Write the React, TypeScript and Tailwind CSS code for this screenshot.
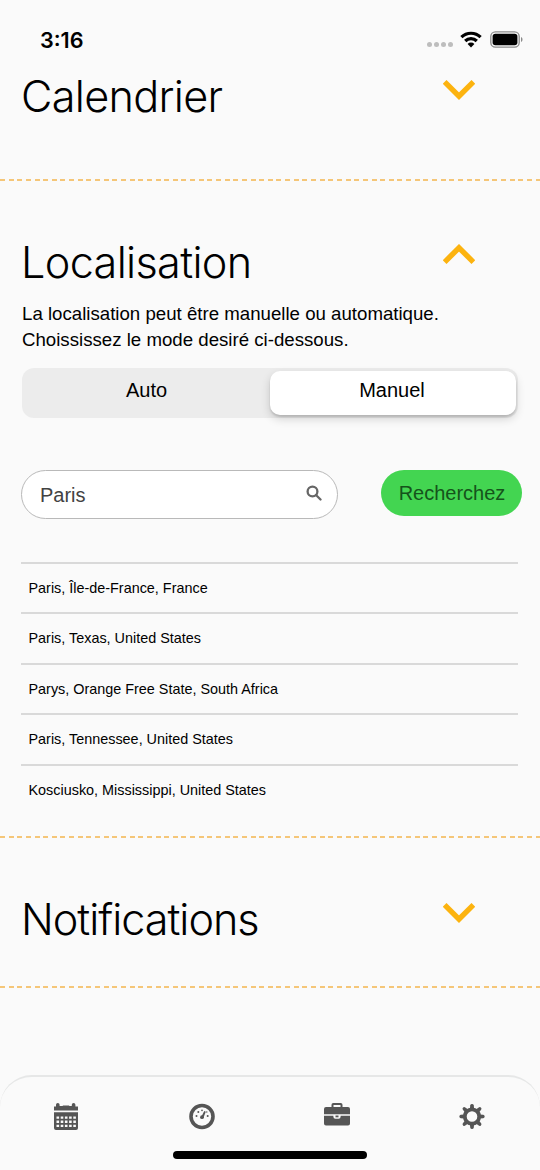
import React from "react";
import clsx from "clsx";

const places = [
  "Paris, Île-de-France, France",
  "Paris, Texas, United States",
  "Parys, Orange Free State, South Africa",
  "Paris, Tennessee, United States",
  "Kosciusko, Mississippi, United States",
];

function StatusBar() {
  return (
    <header className="flex h-[66px] shrink-0 items-start justify-between pt-[27px] pr-[17px] pl-[40px]">
      <span className="font-['Inter',sans-serif] text-[21.6px] leading-[26px] font-semibold">
        3:16
      </span>
      <div className="flex h-[26px] items-center">
        <div className="mt-[9px] mr-[7px] flex gap-[2px]">
          {[0, 1, 2, 3].map((dot) => (
            <span key={dot} className="size-[5px] rounded-full bg-[#bdbdbd]" />
          ))}
        </div>
        <svg width="22" height="17" viewBox="0 0 22 17" className="mr-[8px] mb-[2px]">
          <g fill="none" stroke="#000" strokeWidth="3.200">
            <path d="M1.4 6.2a13.6 13.6 0 0 1 19.2 0" />
            <path d="M5.2 10a8.3 8.3 0 0 1 11.6 0" />
          </g>
          <path d="M11 16.4 7.6 13a4.8 4.8 0 0 1 6.8 0z" />
        </svg>
        <svg width="33" height="17" viewBox="0 0 33 17" className="mb-[2px]">
          <rect
            x="0.8"
            y="0.8"
            width="28.4"
            height="15.4"
            rx="4.6"
            fill="none"
            stroke="#8a8a8a"
            strokeWidth="1.3"
          />
          <rect x="2.6" y="2.7" width="24.8" height="11.6" rx="2.8" />
          <path d="M31 6v5c2-.7 2-4.300 0-5z" fill="#8a8a8a" />
        </svg>
      </div>
    </header>
  );
}

function Chevron({ up }: { up?: boolean }) {
  return (
    <svg
      width="32"
      height="20"
      viewBox="0 0 32 20"
      className={clsx("shrink-0", up && "rotate-180")}>
      <path
        d="M1.600 1.900 16 16.200 30.400 1.900"
        fill="none"
        stroke="#fcb30f"
        strokeWidth="5.400"
      />
    </svg>
  );
}

interface SectionTitleProps {
  title: string;
  open?: boolean;
  className?: string;
}

function SectionTitle({ title, open, className }: SectionTitleProps) {
  return (
    <div className="flex h-[52px] items-start justify-between pr-[65px] pl-[21px]">
      <h2
        className={clsx(
          "font-['Inter',sans-serif] text-[43.2px] leading-[52px] font-light whitespace-nowrap",
          className
        )}>
        {title}
      </h2>
      <div className={open ? "pt-[8px]" : "pt-[10px]"}>
        <Chevron up={open} />
      </div>
    </div>
  );
}

function DashedLine() {
  return (
    <div className="h-[2px] shrink-0 bg-[repeating-linear-gradient(90deg,#f5c678_0px,#f5c678_5px,transparent_5px,transparent_8.64px)]" />
  );
}

function ModeSwitch() {
  return (
    <div className="mx-[22px] mt-[15px] flex h-[50px] rounded-[12px] bg-[#ececec] pt-[3px] pr-[2px] pb-[3px] text-[20px]">
      <button className="h-[38px] flex-1 pl-px leading-[38px]">Auto</button>
      <button className="h-[44px] w-[246px] rounded-[10px] bg-white pr-[2px] pb-[6px] leading-[38px] shadow-[0_4px_10px_rgba(0,0,0,0.16),0_2px_2px_rgba(0,0,0,0.12)]">
        Manuel
      </button>
    </div>
  );
}

function SearchRow() {
  return (
    <div className="mt-[52px] flex items-start justify-between pr-[18px] pl-[21px]">
      <div className="flex h-[49px] w-[317px] items-center justify-between rounded-full border-[1.500px] border-[#b9b9b9] bg-white pr-[15px] pl-[18px] text-[20px] text-[#424242]">
        <span>Paris</span>
        <svg width="16" height="16" viewBox="0 0 16 16" className="mb-[3px]">
          <g fill="none" stroke="#666" strokeWidth="2.300">
            <circle cx="6.500" cy="6.500" r="4.900" />
            <path d="m10 10 4.500 4.500" strokeLinecap="round" />
          </g>
        </svg>
      </div>
      <button className="h-[46px] w-[141px] rounded-full bg-[#43d551] pl-px text-[20px] text-[#15531b]">
        Recherchez
      </button>
    </div>
  );
}

function TabBar() {
  return (
    <nav className="relative mt-auto flex h-[95px] shrink-0 items-start justify-between rounded-t-[32px] border-t-2 border-[#e6e7e7] pt-[25px] pr-[55px] pl-[53px] text-[#555]">
      <svg width="26" height="29" viewBox="0 -1 26 29" fill="currentColor">
        <path d="M1 3.500h2V1.700a1.800 1.800 0 0 1 3.600 0v1.300h3.200V2.600h6.400V3h2.600V1.700a1.800 1.800 0 0 1 3.600 0v1.800H25v4H1z" />
        <path
          fillRule="evenodd"
          d="M1 9.200h24V25a2 2 0 0 1-2 2H3a2 2 0 0 1-2-2zM3.500 13.500v2.300h2.600v-2.300zm4.200 0v2.300h2.600v-2.300zm4.200 0v2.300h2.600v-2.300zm4.200 0v2.300h2.600v-2.300zm4.200 0v2.300h2.600v-2.300zM3.500 17.600v2.300h2.600v-2.300zm4.200 0v2.300h2.600v-2.300zm4.200 0v2.300h2.600v-2.300zm4.200 0v2.300h2.600v-2.300zm4.200 0v2.300h2.600v-2.300zM3.500 21.700V24h2.600v-2.300zm4.200 0V24h2.600v-2.300zm4.200 0V24h2.600v-2.300zm4.200 0V24h2.600v-2.300zm4.200 0V24h2.600v-2.300z"
        />
      </svg>
      <svg width="26" height="27" viewBox="0 0 26 27" className="mt-px ml-px">
        <circle cx="13" cy="13.500" r="11" fill="none" stroke="currentColor" strokeWidth="3.600" />
        <g fill="currentColor">
          <circle cx="13" cy="14.200" r="1.900" />
          <path d="M12.200 14 15.300 8l1.500.7-2.500 6.200z" />
          <circle cx="7.500" cy="13" r="1" />
          <circle cx="9.300" cy="9" r="1" />
          <circle cx="13" cy="7.400" r=".8" />
          <circle cx="17.800" cy="9" r=".7" />
          <circle cx="18.700" cy="13" r="1" />
        </g>
      </svg>
      <svg width="26" height="24" viewBox="0 -1 26 24" fill="currentColor">
        <path
          fillRule="evenodd"
          d="M7.500 4V1.800Q7.500 0 9.300 0h7.400q1.800 0 1.800 1.800V4H24q2 0 2 2v5.200H0V6q0-2 2-2zm2 0h7V1.900h-7z"
        />
        <path d="M0 12.700h9.400v1.100q0 2 2 2h3.200q2 0 2-2v-1.100H26V20.500q0 2-2 2H2q-2 0-2-2z" />
        <path d="M11.500 12.500h3v1.800h-3z" />
      </svg>
      <svg width="26" height="27" viewBox="-13 -13.500 26 27" className="mt-px">
        <circle r="7.200" fill="none" stroke="currentColor" strokeWidth="3.800" />
        <g fill="currentColor">
          {[0, 45, 90, 135, 180, 225, 270, 315].map((angle) => (
            <path
              key={angle}
              d="M-2.100-8-1.700-11.200Q-1.500-12.600 0-12.600T1.700-11.200L2.100-8z"
              transform={`rotate(${angle})`}
            />
          ))}
        </g>
      </svg>
      <div className="absolute bottom-[11px] left-[173px] h-[8px] w-[194px] rounded-full bg-black" />
    </nav>
  );
}

function App() {
  return (
    <div className="flex h-[1170px] w-[540px] flex-col overflow-hidden bg-[#fafafa] font-['Liberation_Sans',Arial,sans-serif] text-black">
      <StatusBar />
      <section className="h-[113px] shrink-0 pt-[4px]">
        <SectionTitle title="Calendrier" className="tracking-[-0.7px]" />
      </section>
      <DashedLine />
      <section className="h-[655px] shrink-0 pt-[55px]">
        <SectionTitle title="Localisation" open className="tracking-[-0.66px]" />
        <p className="mt-[13px] pl-[22px] text-[18.66px] leading-[26px] whitespace-nowrap">
          La localisation peut être manuelle ou automatique.
          <br />
          Choississez le mode desiré ci-dessous.
        </p>
        <ModeSwitch />
        <SearchRow />
        <ul className="mt-[43px] mr-[22px] ml-[21px]">
          {places.map((place) => (
            <li
              key={place}
              className="h-[50.4px] border-t-2 border-[#d9d9d9] pl-[7.500px] text-[14.4px] leading-[49px] whitespace-nowrap">
              {place}
            </li>
          ))}
        </ul>
      </section>
      <DashedLine />
      <section className="h-[148px] shrink-0 pt-[55px]">
        <SectionTitle title="Notifications" className="tracking-[-1.02px]" />
      </section>
      <DashedLine />
      <TabBar />
    </div>
  );
}

export default App;
